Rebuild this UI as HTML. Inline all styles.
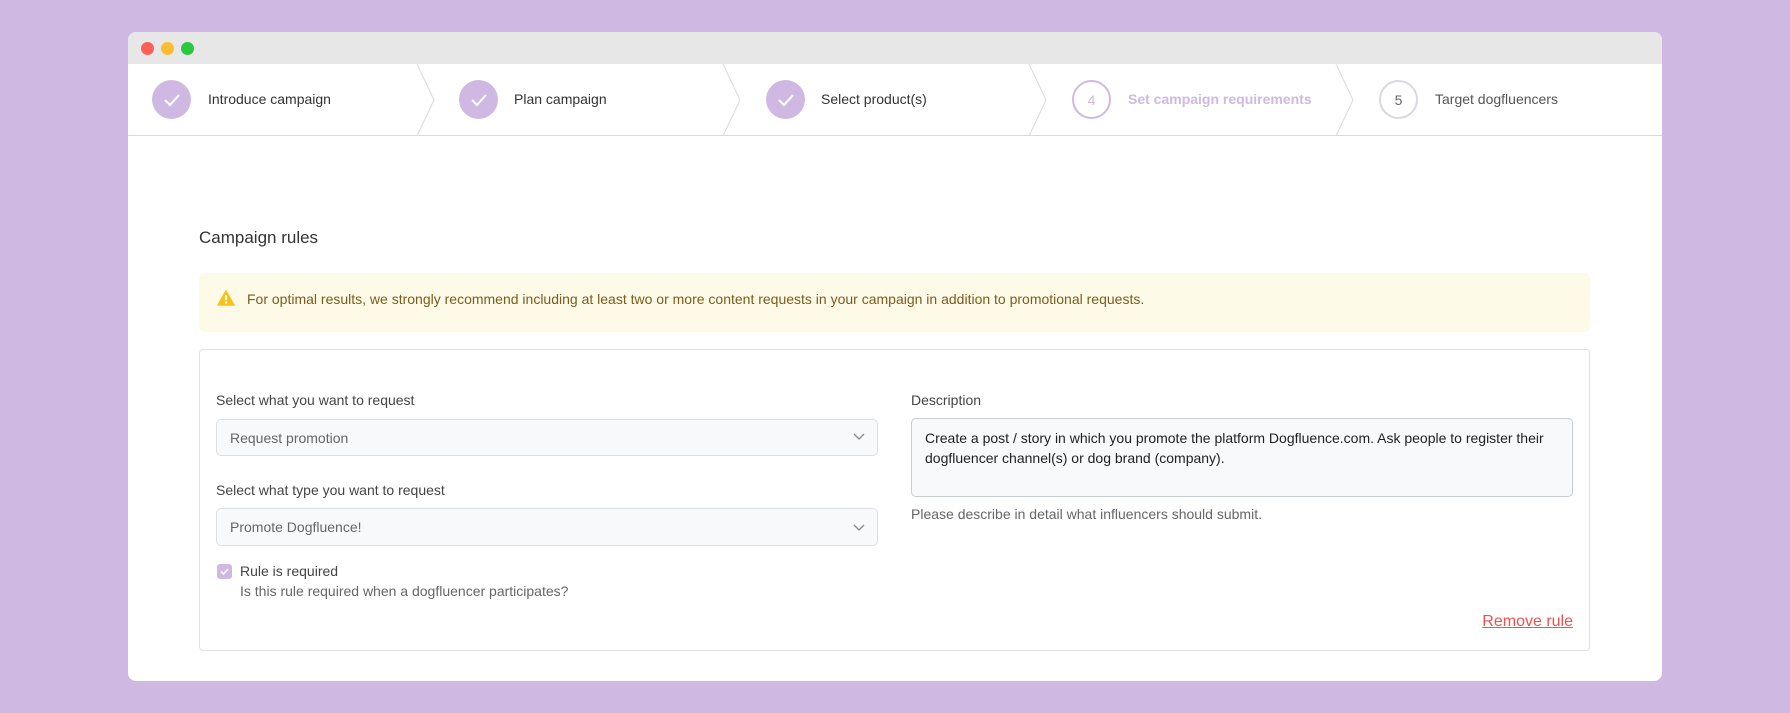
<!DOCTYPE html>
<html><head><style>
*{box-sizing:border-box;margin:0;padding:0}
body{width:1790px;height:713px;background:#cfb9e3;font-family:"Liberation Sans",sans-serif;position:relative;overflow:hidden;color:#333}
.win{position:absolute;left:128px;top:32px;width:1534px;height:649px;background:#fff;border-radius:8px;overflow:hidden}
.tb{position:absolute;left:0;top:0;width:100%;height:32px;background:#e7e7e7}
.dot{position:absolute;top:10px;width:13px;height:13px;border-radius:50%}
.steps{position:absolute;left:0;top:32px;width:100%;height:72px;border-bottom:1px solid #d8d8e0;background:#fff;border-radius:8px 8px 0 0}
.c{position:absolute;top:16px;width:39px;height:39px;border-radius:50%;background:#cfb9e3;display:flex;align-items:center;justify-content:center;color:#fff;font-size:14px}
.c.o{background:#fff;border:2px solid #cfb9e3;color:#cfb9e3}
.c.g{background:#fff;border:2px solid #d8d8e0;color:#666}
.st{position:absolute;top:27px;font-size:14px;color:#333}
.abs{position:absolute}
.lbl{font-size:14px;color:#444}
.sel{position:absolute;background:#f8f9fa;border:1px solid #dcdfe3;border-radius:5px;font-size:14px;color:#666;padding-left:13px;display:flex;align-items:center}
</style></head><body>
<div class="win">
<div class="tb"><div class="dot" style="left:13px;background:#fe5f57"></div><div class="dot" style="left:33px;background:#febc2e"></div><div class="dot" style="left:53px;background:#28c840"></div></div>
<div class="steps">
<svg class="abs" style="left:0;top:0" width="1534" height="72">
<g fill="none" stroke="#d8d8e0" stroke-width="1">
<path d="M289 0 L306 36 L289 72"/><path d="M595 0 L612 36 L595 72"/><path d="M901 0 L918 36 L901 72"/><path d="M1208 0 L1225 36 L1208 72"/>
</g></svg>
<div class="c" style="left:24px"><svg width="18" height="14"><path d="M2 7 L7 12 L16 2" fill="none" stroke="#fff" stroke-width="2"/></svg></div>
<div class="st" style="left:80px">Introduce campaign</div>
<div class="c" style="left:331px"><svg width="18" height="14"><path d="M2 7 L7 12 L16 2" fill="none" stroke="#fff" stroke-width="2"/></svg></div>
<div class="st" style="left:386px">Plan campaign</div>
<div class="c" style="left:638px"><svg width="18" height="14"><path d="M2 7 L7 12 L16 2" fill="none" stroke="#fff" stroke-width="2"/></svg></div>
<div class="st" style="left:693px">Select product(s)</div>
<div class="c o" style="left:944px">4</div>
<div class="st" style="left:1000px;color:#cfb9e3;font-weight:bold">Set campaign requirements</div>
<div class="c g" style="left:1251px">5</div>
<div class="st" style="left:1307px;color:#555">Target dogfluencers</div>
</div>
<div class="abs" style="left:71px;top:196px;font-size:17px;color:#333">Campaign rules</div>
<div class="abs" style="left:71px;top:241px;width:1391px;height:59px;background:#fefae8;border-radius:5px"></div>
<svg class="abs" style="left:89px;top:258px" width="18" height="16"><path d="M9 1 L17 15 L1 15 Z" fill="#f8c21c" stroke="#f8c21c" stroke-linejoin="round" stroke-width="1.5"/><rect x="8" y="5" width="2" height="5" fill="#fff"/><rect x="8" y="11.5" width="2" height="2" fill="#fff"/></svg>
<div class="abs" style="left:119px;top:259px;font-size:14px;color:#7a5c1e">For optimal results, we strongly recommend including at least two or more content requests in your campaign in addition to promotional requests.</div>
<div class="abs" style="left:71px;top:317px;width:1391px;height:302px;border:1px solid #e2e2e6;border-radius:4px"></div>
<div class="abs lbl" style="left:88px;top:360px">Select what you want to request</div>
<div class="sel" style="left:88px;top:387px;width:662px;height:37px">Request promotion</div>
<div class="abs lbl" style="left:88px;top:450px">Select what type you want to request</div>
<div class="sel" style="left:88px;top:476px;width:662px;height:38px">Promote Dogfluence!</div>
<svg class="abs" style="left:725px;top:401px" width="12" height="8"><path d="M1 1 L6 6 L11 1" fill="none" stroke="#888" stroke-width="1.3"/></svg>
<svg class="abs" style="left:725px;top:492px" width="12" height="8"><path d="M1 1 L6 6 L11 1" fill="none" stroke="#888" stroke-width="1.3"/></svg>
<div class="abs" style="left:89px;top:532px;width:15px;height:15px;background:#cfb9e3;border-radius:3px"><svg width="15" height="15"><path d="M4 7.5 L6.5 10 L11 5" fill="none" stroke="#fff" stroke-width="1.5"/></svg></div>
<div class="abs lbl" style="left:112px;top:531px;color:#444">Rule is required</div>
<div class="abs" style="left:112px;top:551px;font-size:14px;color:#666">Is this rule required when a dogfluencer participates?</div>
<div class="abs lbl" style="left:783px;top:360px">Description</div>
<div class="abs" style="left:783px;top:386px;width:662px;height:79px;background:#f8f9fa;border:1px solid #c8ccd3;border-radius:5px;font-size:14px;color:#222;padding:9px 13px;line-height:20px">Create a post / story in which you promote the platform Dogfluence.com. Ask people to register their dogfluencer channel(s) or dog brand (company).</div>
<div class="abs" style="left:783px;top:474px;font-size:14px;color:#666">Please describe in detail what influencers should submit.</div>
<div class="abs" style="right:89px;top:581px;font-size:16px;color:#f0504f;text-decoration:underline">Remove rule</div>
</div>
</body></html>
